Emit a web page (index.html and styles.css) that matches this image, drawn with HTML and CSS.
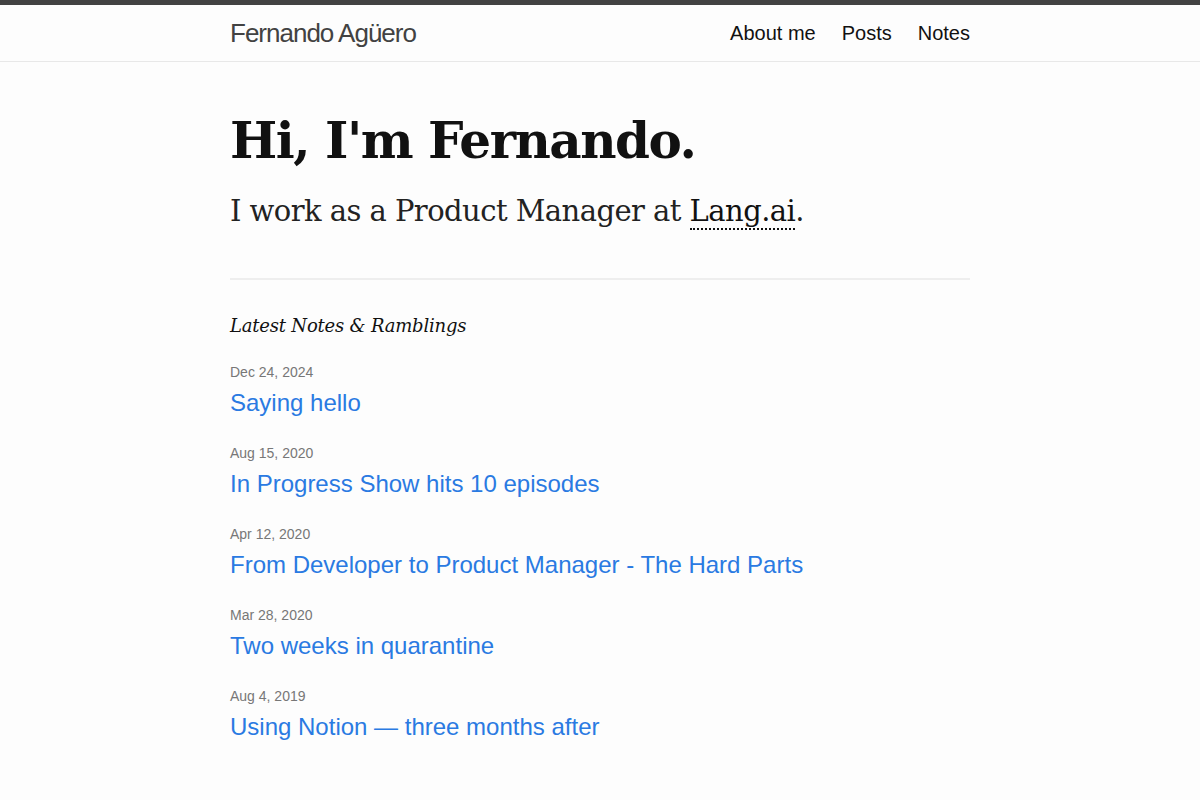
FILE: index.html
```html
<!DOCTYPE html>
<html lang="en">
  <head>
    <meta charset="UTF-8" />
    <meta name="viewport" content="width=device-width, initial-scale=1.0" />
    <title>Fernando Agüero</title>
    <link rel="stylesheet" href="styles.css">
  </head>
  <body>
    <header class="site-header">
      <div class="wrapper header-inner">
        <a class="site-title" href="#">Fernando Agüero</a>
        <nav class="site-nav">
          <a href="#">About me</a>
          <a href="#">Posts</a>
          <a href="#">Notes</a>
        </nav>
      </div>
    </header>

    <main class="wrapper">
      <section class="intro">
        <h1>Hi, I'm Fernando.</h1>
        <p>I work as a Product Manager at <a href="#">Lang.ai</a>.</p>
      </section>

      <section class="posts">
        <h2>Latest Notes &amp; Ramblings</h2>
        <ul class="post-list">
          <li>
            <span class="post-meta">Dec 24, 2024</span>
            <a class="post-link" href="#">Saying hello</a>
          </li>
          <li>
            <span class="post-meta">Aug 15, 2020</span>
            <a class="post-link" href="#">In Progress Show hits 10 episodes</a>
          </li>
          <li>
            <span class="post-meta">Apr 12, 2020</span>
            <a class="post-link" href="#">From Developer to Product Manager - The Hard Parts</a>
          </li>
          <li>
            <span class="post-meta">Mar 28, 2020</span>
            <a class="post-link" href="#">Two weeks in quarantine</a>
          </li>
          <li>
            <span class="post-meta">Aug 4, 2019</span>
            <a class="post-link" href="#">Using Notion — three months after</a>
          </li>
        </ul>
      </section>
    </main>
  </body>
</html>
```

FILE: styles.css
```css
body {
  margin: 0;
  background: #fdfdfd;
  color: #111;
  font-family: "Liberation Sans", Arial, sans-serif;
}

a {
  text-decoration: none;
}

.wrapper {
  width: 740px;
  margin: 0 auto;
}

/* Header */
.site-header {
  border-top: 5px solid #424242;
  border-bottom: 1px solid #e8e8e8;
}

.header-inner {
  height: 56px;
  display: flex;
  align-items: center;
  justify-content: space-between;
}

.site-title {
  font-size: 26px;
  letter-spacing: -1px;
  color: #424242;
}

.site-nav {
  display: flex;
  gap: 26px;
}

.site-nav a {
  font-size: 20px;
  color: #111;
}

/* Intro */
.intro {
  padding-top: 47px;
  padding-bottom: 47px;
  border-bottom: 2px solid #eee;
  font-family: "DejaVu Serif", Georgia, serif;
}

.intro h1 {
  margin: 0;
  font-size: 50px;
  line-height: 64px;
  font-weight: bold;
  letter-spacing: -1.5px;
  color: #111;
}

.intro p {
  margin: 18px 0 0;
  font-size: 29px;
  line-height: 40px;
  font-weight: 300;
  letter-spacing: -0.55px;
  color: #222;
}

.intro p a {
  color: #111;
  border-bottom: 2px dotted #111;
}

/* Posts */
.posts h2 {
  margin: 32px 0 22px;
  font-family: "DejaVu Serif", Georgia, serif;
  font-style: italic;
  font-weight: normal;
  font-size: 18px;
  line-height: 28px;
  letter-spacing: -0.2px;
  color: #111;
}

.post-list {
  list-style: none;
  margin: 0;
  padding: 0;
}

.post-list li {
  margin-bottom: 20px;
}

.post-meta {
  display: block;
  margin-bottom: 1px;
  font-size: 14px;
  line-height: 20px;
  color: #777;
}

.post-link {
  display: block;
  font-size: 24px;
  line-height: 40px;
  color: #2a7ae2;
}
```
